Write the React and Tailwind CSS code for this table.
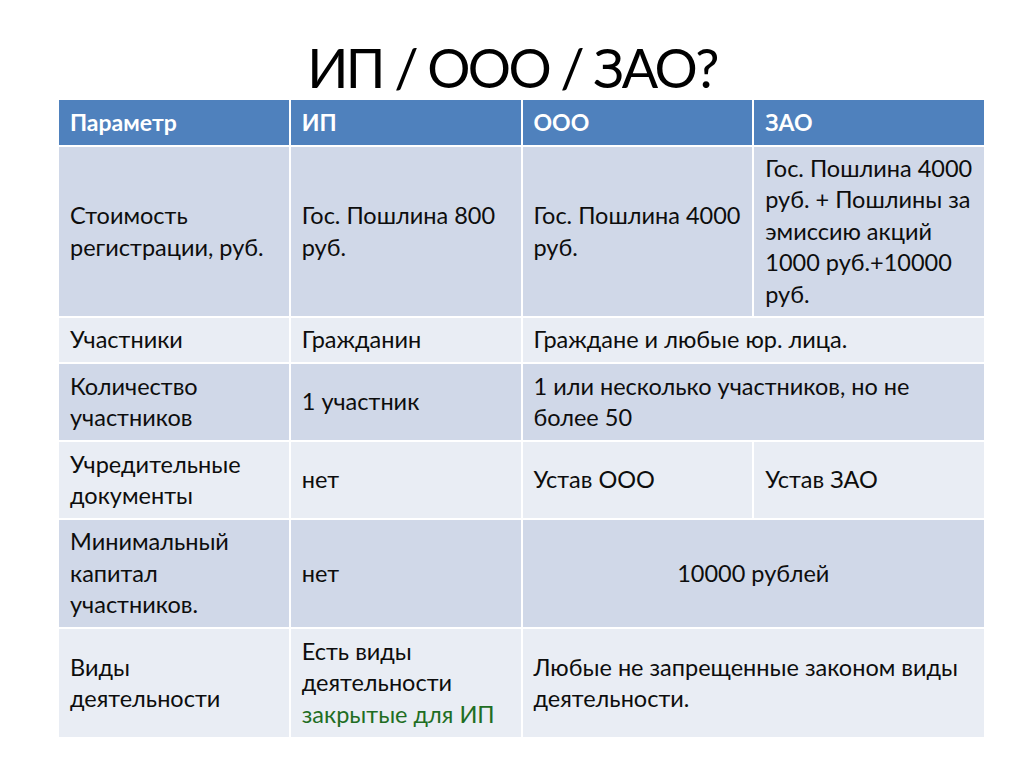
import React from "react";

const dark = "bg-[#d0d8e8]";
const light = "bg-[#e9edf4]";

function Cell({ bg, children, className = "", center = false }) {
  return (
    <div
      className={`${bg} flex items-center ${center ? "justify-center" : "pl-[11px] pr-[2px]"} text-[23.5px] leading-[31.5px] text-[#0d0d0d] whitespace-nowrap ${className}`}
    >
      <div>{children}</div>
    </div>
  );
}

function Head({ children }) {
  return (
    <div className="bg-[#4f81bd] flex items-center pl-[11px] text-[23px] font-bold text-white">
      {children}
    </div>
  );
}

export default function App() {
  return (
    <div
      className="w-[1024px] h-[767px] bg-white overflow-hidden"
      style={{ fontFamily: "Lato, 'Open Sans', sans-serif" }}
    >
      <div className="h-[100px] flex items-center justify-center pt-[42px]">
        <h1 className="text-[54px] leading-none text-black font-normal tracking-[-2.6px] -mt-[6px]">
          ИП / ООО / ЗАО?
        </h1>
      </div>
      <div className="ml-[59px] w-[925px] grid grid-cols-4 gap-[2px] grid-rows-[45px_169px_44px_76px_76px_107px_108px]">
        <Head>Параметр</Head>
        <Head>ИП</Head>
        <Head>ООО</Head>
        <Head>ЗАО</Head>

        <Cell bg={dark}>
          Стоимость
          <br />
          регистрации, руб.
        </Cell>
        <Cell bg={dark}>
          Гос. Пошлина 800
          <br />
          руб.
        </Cell>
        <Cell bg={dark}>
          Гос. Пошлина 4000
          <br />
          руб.
        </Cell>
        <Cell bg={dark}>
          Гос. Пошлина 4000
          <br />
          руб. + Пошлины за
          <br />
          эмиссию акций
          <br />
          1000 руб.+10000
          <br />
          руб.
        </Cell>

        <Cell bg={light}>Участники</Cell>
        <Cell bg={light}>Гражданин</Cell>
        <Cell bg={light} className="col-span-2">
          Граждане и любые юр. лица.
        </Cell>

        <Cell bg={dark}>
          Количество
          <br />
          участников
        </Cell>
        <Cell bg={dark}>1 участник</Cell>
        <Cell bg={dark} className="col-span-2">
          1 или несколько участников, но не
          <br />
          более 50
        </Cell>

        <Cell bg={light}>
          Учредительные
          <br />
          документы
        </Cell>
        <Cell bg={light}>нет</Cell>
        <Cell bg={light}>Устав ООО</Cell>
        <Cell bg={light}>Устав ЗАО</Cell>

        <Cell bg={dark}>
          Минимальный
          <br />
          капитал
          <br />
          участников.
        </Cell>
        <Cell bg={dark}>нет</Cell>
        <Cell bg={dark} className="col-span-2" center>
          10000 рублей
        </Cell>

        <Cell bg={light}>
          Виды
          <br />
          деятельности
        </Cell>
        <Cell bg={light}>
          Есть виды
          <br />
          деятельности
          <br />
          <span className="text-[#1f6e23]">закрытые для ИП</span>
        </Cell>
        <Cell bg={light} className="col-span-2">
          Любые не запрещенные законом виды
          <br />
          деятельности.
        </Cell>
      </div>
    </div>
  );
}
